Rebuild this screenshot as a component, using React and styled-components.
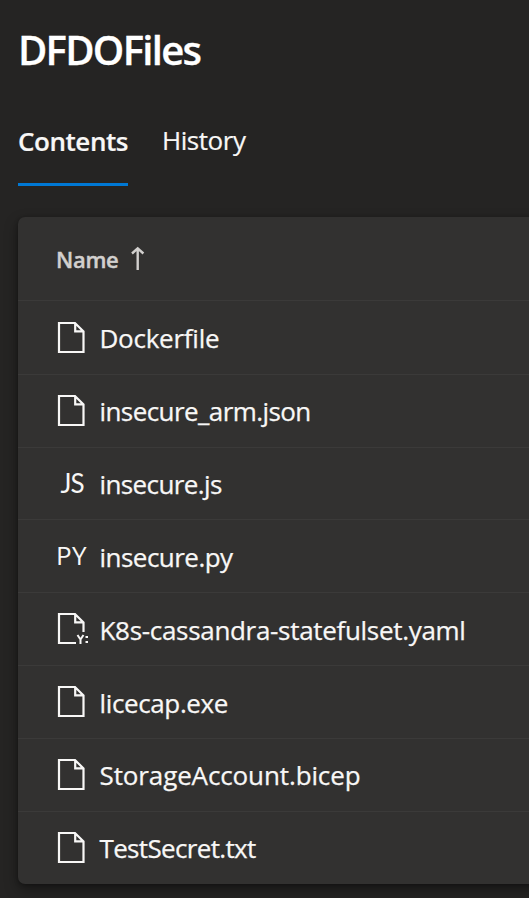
import React from "react";
import styled, { createGlobalStyle } from "styled-components";

const GlobalStyle = createGlobalStyle`
  * { box-sizing: border-box; }
  body {
    margin: 0;
    background: #252423;
    color: #f8f7f6;
    font-family: "Segoe UI", "Open Sans", "Noto Sans", sans-serif;
    overflow: hidden;
  }
`;

const Page = styled.main`
  height: 898px;
  padding-left: 18px;
  display: flex;
  flex-direction: column;
  overflow: hidden;
`;

const Title = styled.h1`
  margin: 23px 0 0 0;
  height: 54px;
  line-height: 54px;
  font-size: 40px;
  font-weight: 600;
  letter-spacing: -1.7px;
  -webkit-text-stroke: 0.3px currentColor;
  color: #ffffff;
  white-space: nowrap;
`;

const Tabs = styled.nav`
  display: flex;
  gap: 34px;
  height: 78px;
  margin: 31px 0 31px;
`;

const Tab = styled.a`
  height: 78px;
  width: ${(p) => p.$width}px;
  line-height: ${(p) => (p.$active ? 66 : 64)}px;
  font-size: 26px;
  font-weight: ${(p) => (p.$active ? 600 : 400)};
  letter-spacing: ${(p) => p.$spacing}px;
  -webkit-text-stroke: 0.2px currentColor;
  border-bottom: 3px solid ${(p) => (p.$active ? "#0078d4" : "transparent")};
  white-space: nowrap;
`;

const Card = styled.section`
  width: 540px;
  height: 667px;
  flex: none;
  display: grid;
  grid-template-rows: 84px 74px 73px 72px 73px 73px 73px 73px 72px;
  background: #323130;
  border-radius: 7px;
  box-shadow: 0 6px 14px rgba(0, 0, 0, 0.36), 0 1px 4px rgba(0, 0, 0, 0.3);
`;

const Header = styled.div`
  display: flex;
  align-items: flex-start;
  padding: 27px 0 0 38px;
  gap: 12px;
  border-bottom: 1px solid #3b3a39;
  color: #d2d0ce;
  font-size: 22px;
  line-height: 30px;
  font-weight: 600;
`;

const HeaderLabel = styled.span`
  width: 63px;
  letter-spacing: -0.3px;
  -webkit-text-stroke: 0.4px currentColor;
`;

const Row = styled.div`
  display: flex;
  align-items: flex-start;
  padding-left: 38px;
  border-bottom: 1px solid #3b3a39;

  &:last-child { border-bottom: 0; }
`;

const IconCell = styled.span`
  display: flex;
  flex: none;
  width: 43.5px;
  padding-top: ${(p) => p.$top}px;
`;

const TypeLabel = styled.span`
  padding-left: ${(p) => p.$inset}px;
  font-family: ${(p) => p.$family};
  font-size: 26px;
  line-height: 36px;
  letter-spacing: ${(p) => p.$spacing}px;
`;

const FileName = styled.span`
  padding-top: ${(p) => p.$top}px;
  font-size: 26px;
  line-height: 36px;
  letter-spacing: ${(p) => p.$spacing}px;
  -webkit-text-stroke: 0.25px currentColor;
  white-space: nowrap;
`;

const Glyph = styled.svg`
  display: block;
  flex: none;
  overflow: visible;
`;

const SortArrow = () => (
  <Glyph width="14" height="30" viewBox="0 0 14 30" fill="none" stroke="currentColor" strokeWidth="2.400">
    <path d="M6.700 26V4.500M1 9.500L6.700 4.300L12.400 9.500" />
  </Glyph>
);

const FileIcon = ({ yaml }) => (
  <Glyph width="34" height="34" viewBox="0 0 34 34" fill="none" stroke="currentColor" strokeWidth="2.200">
    {yaml ? (
      <>
        <path d="M20 31H3V2H19L27.500 10.500V20M19.200 2V10.300H27.500" />
        <path d="M21.500 23L24.500 27.500L27.500 23M24.500 27V32" strokeWidth="2" />
        <path d="M29.500 25H32M29.500 30H32" />
      </>
    ) : (
      <path d="M3 2H19L27.500 10.500V31H3ZM19.200 2V10.300H27.500" />
    )}
  </Glyph>
);

const sans = '"Open Sans", sans-serif';
const lato = '"Lato", sans-serif';

const files = [
  { name: "Dockerfile", spacing: -0.25, iconTop: 20, textTop: 19 },
  { name: "insecure_arm.json", spacing: -0.58, iconTop: 19, textTop: 18 },
  { name: "insecure.js", spacing: -0.6, iconTop: 17, textTop: 18, label: "JS", inset: 4.5, labelSpacing: -0.9, family: lato },
  { name: "insecure.py", spacing: -0.53, iconTop: 17, textTop: 19, label: "PY", inset: 0, labelSpacing: 0.3, family: sans },
  { name: "K8s-cassandra-statefulset.yaml", spacing: -0.31, iconTop: 19, textTop: 19, yaml: true },
  { name: "licecap.exe", spacing: -0.37, iconTop: 19, textTop: 19 },
  { name: "StorageAccount.bicep", spacing: -0.12, iconTop: 19, textTop: 18 },
  { name: "TestSecret.txt", spacing: -0.66, iconTop: 19, textTop: 18 },
];

export default function App() {
  return (
    <Page>
      <GlobalStyle />
      <Title>DFDOFiles</Title>
      <Tabs>
        <Tab $active $width={110} $spacing={-0.45}>Contents</Tab>
        <Tab $width={86} $spacing={-0.45}>History</Tab>
      </Tabs>
      <Card>
        <Header>
          <HeaderLabel>Name</HeaderLabel>
          <SortArrow />
        </Header>
        {files.map((f) => (
          <Row key={f.name}>
            <IconCell $top={f.iconTop}>
              {f.label ? (
                <TypeLabel $inset={f.inset} $family={f.family} $spacing={f.labelSpacing}>{f.label}</TypeLabel>
              ) : (
                <FileIcon yaml={f.yaml} />
              )}
            </IconCell>
            <FileName $top={f.textTop} $spacing={f.spacing}>{f.name}</FileName>
          </Row>
        ))}
      </Card>
    </Page>
  );
}
